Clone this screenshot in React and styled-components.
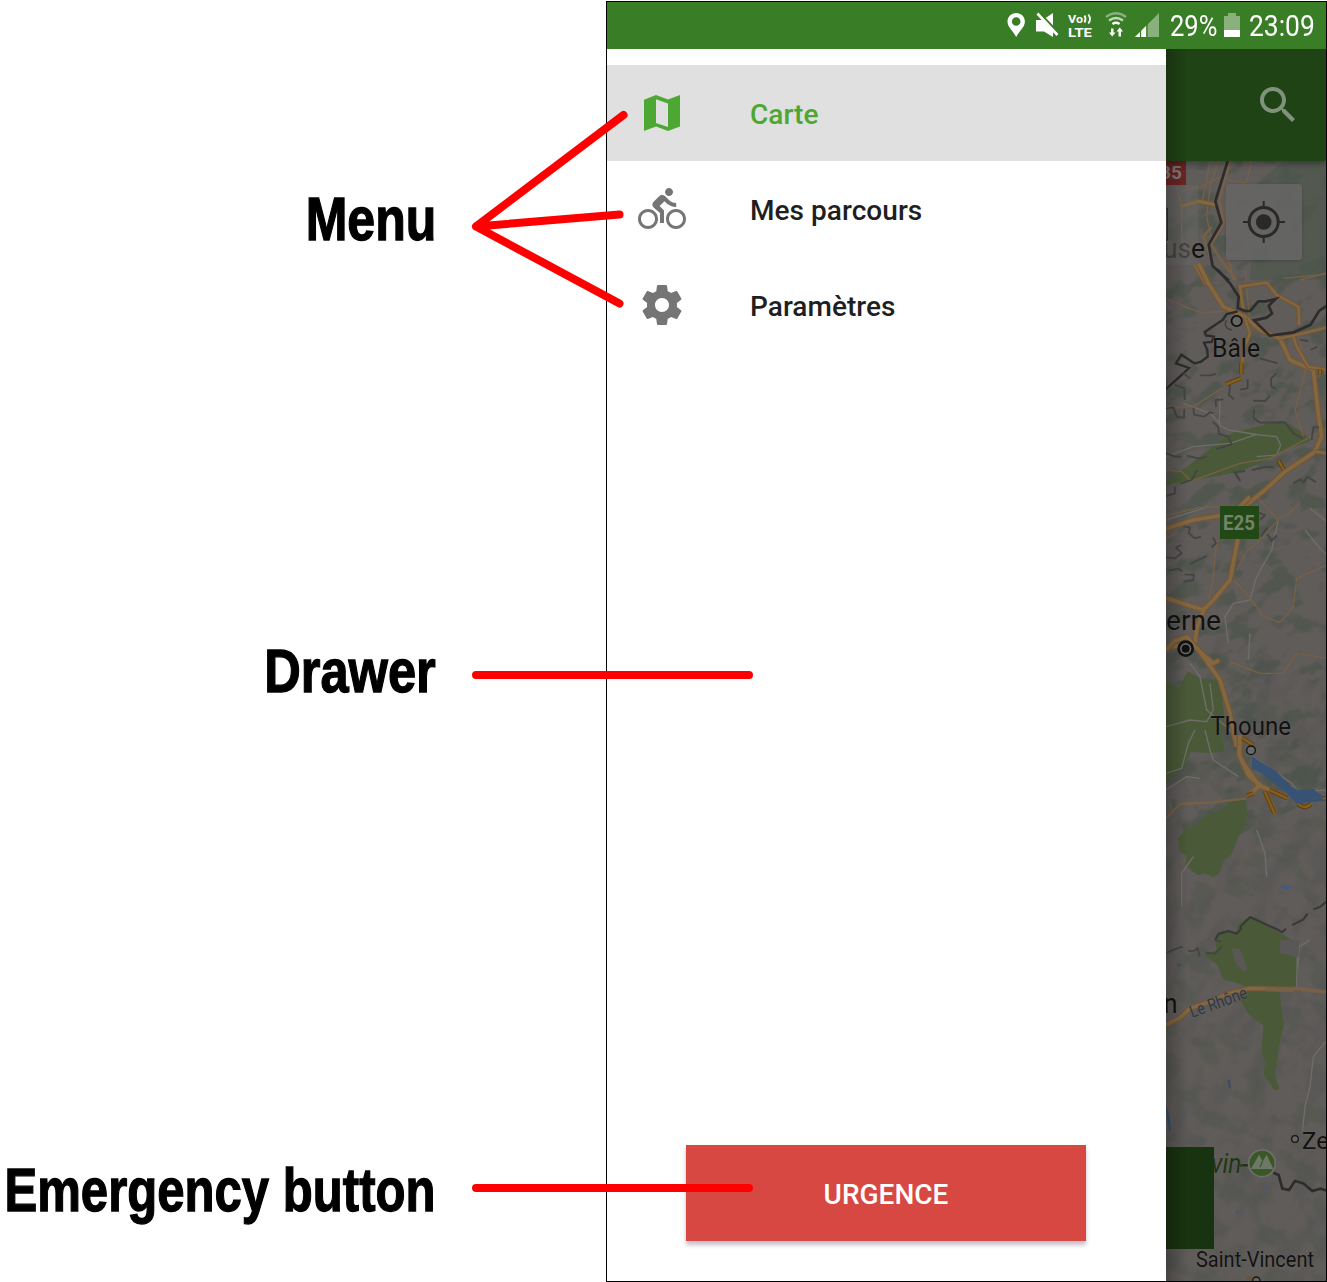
import React from 'react';
import styled, { createGlobalStyle } from 'styled-components';

const GlobalStyle = createGlobalStyle`
  * { box-sizing: border-box; }
  body { margin: 0; background: #fff; }
`;

const Page = styled.main`
  position: relative;
  display: flex;
  width: 1327px;
  height: 1282px;
  overflow: hidden;
  font-family: Roboto, 'Liberation Sans', sans-serif;
`;

const Captions = styled.section`
  width: 606px;
  flex: none;
  display: flex;
  flex-direction: column;
  align-items: flex-end;
  padding: 184px 170px 0 0;
`;

const Caption = styled.h2`
  margin: 0 0 ${(p) => p.$after || 0}px;
  height: 70px;
  white-space: nowrap;
  font: bold 61px/70px 'Liberation Sans', Arial, sans-serif;
  color: #000;
  transform: scaleX(${(p) => p.$squeeze});
  transform-origin: right center;
  -webkit-text-stroke: 1.3px #000;
`;

const Pointers = styled.svg`
  position: absolute;
  inset: 0;
  pointer-events: none;
`;

const Phone = styled.section`
  width: 721px;
  height: 1281px;
  margin-top: 1px;
  border: 1px solid #000;
  display: flex;
  flex-direction: column;
`;

const StatusBar = styled.header`
  height: 47px;
  flex: none;
  display: flex;
  justify-content: flex-end;
  background: #397d26;
  color: #fff;
`;

const StatusIcons = styled.svg`
  flex: none;
  width: 164px;
  height: 47px;
`;

const StatusText = styled.span`
  width: ${(p) => p.$width}px;
  font-size: 29px;
  line-height: 49px;
  white-space: nowrap;
  transform: scaleX(${(p) => p.$squeeze});
  transform-origin: left center;
`;

const Battery = styled.svg`
  width: 17px;
  height: 47px;
  margin-right: 8px;
`;

const Body = styled.div`
  flex: 1;
  display: flex;
  min-height: 0;
`;

const Drawer = styled.nav`
  width: 559px;
  flex: none;
  display: flex;
  flex-direction: column;
  padding-top: 16px;
  background: #fff;
`;

const MenuItem = styled.a`
  height: 96px;
  display: flex;
  align-items: center;
  gap: 64px;
  padding-left: 31px;
  background: ${(p) => (p.$active ? '#e0e0e0' : 'transparent')};
  color: ${(p) => (p.$active ? '#4ca832' : '#1f1f1f')};
  font-size: 28px;
  font-weight: 500;
  line-height: 36px;
`;

const MenuLabel = styled.span`
  padding-top: 4px;
  letter-spacing: 0.05px;
`;

const MenuIcon = styled.svg`
  width: 48px;
  height: 48px;
  fill: ${(p) => (p.$active ? '#4ca832' : '#757575')};
`;

const EmergencyButton = styled.button`
  width: 400px;
  height: 96px;
  margin: auto 0 40px 79px;
  padding: 2px 0 0;
  border: 0;
  background: #d84843;
  box-shadow: 0 4px 4px rgba(60, 30, 60, 0.28);
  color: #fff;
  font: 500 28px Roboto, sans-serif;
`;

const Backdrop = styled.div`
  position: relative;
  width: 160px;
  display: flex;
  flex-direction: column;
  background: #5f5b5a;
  overflow: hidden;
`;

const AppBar = styled.div`
  height: 112px;
  flex: none;
  display: flex;
  align-items: center;
  justify-content: flex-end;
  padding-right: 24px;
  background: #204315;
  box-shadow: 0 3px 6px rgba(0, 0, 0, 0.35);
  z-index: 1;
`;

const SearchIcon = styled.svg`
  width: 48px;
  height: 48px;
  fill: #7f927b;
`;

const MapView = styled.div`
  position: relative;
  flex: 1;
`;

const MapCanvas = styled.svg`
  display: block;
`;

const LocateButton = styled.button`
  position: absolute;
  top: 23px;
  right: 24px;
  width: 76px;
  height: 76px;
  padding: 0;
  border: 0;
  border-radius: 3px;
  background: rgba(103, 101, 100, 0.88);
  box-shadow: 0 1px 3px rgba(0, 0, 0, 0.2);
`;

const DrawerShade = styled.div`
  position: absolute;
  inset: 0 auto 0 0;
  width: 22px;
  z-index: 2;
  background: linear-gradient(90deg, rgba(0, 0, 0, 0.24), transparent);
`;

const ROAD = '#84663f';
const CASING = '#6f573b';

const Road = ({ d, w = 9 }) => (
  <>
    <path d={d} stroke={CASING} strokeWidth={w + 7} />
    <path d={d} stroke={ROAD} strokeWidth={w} />
  </>
);
const Lane = ({ d, w = 4 }) => <path d={d} stroke="#776046" strokeWidth={w} />;
const Path = ({ d }) => <path d={d} stroke="#6e6e6b" strokeWidth="4" />;
const Frontier = ({ d, w = 8 }) => <path d={d} stroke="#2d2b2b" strokeWidth={w} strokeLinejoin="miter" />;
const Ridge = ({ d }) => <path d={d} stroke="#434544" strokeWidth="5.5" />;
const Park = ({ d }) => <path d={d} fill="#4a5a38" stroke="#4a5a38" strokeWidth="10" />;
const Highlight = ({ d }) => (
  <>
    <path d={d} stroke="#59401c" strokeWidth="13" />
    <path d={d} stroke="#8a5f15" strokeWidth="7" />
  </>
);
// Each tile is drawn at three units per pixel, starting at the given row.
const Tile = ({ y, children }) => (
  <g transform={`translate(1150 ${y}) scale(.33333)`} fill="none" strokeLinejoin="round" strokeLinecap="butt">
    {children}
  </g>
);

function Relief() {
  return (
    <>
      <defs>
        <filter id="woods" x="0" y="0" width="100%" height="100%" colorInterpolationFilters="sRGB">
          <feTurbulence type="fractalNoise" baseFrequency="0.035 0.055" numOctaves="3" seed="8" />
          <feColorMatrix values="0 0 0 0 .27  0 0 0 0 .32  0 0 0 0 .27  7 0 0 0 -3.6" />
        </filter>
        <filter id="slopes" x="0" y="0" width="100%" height="100%" colorInterpolationFilters="sRGB">
          <feTurbulence type="fractalNoise" baseFrequency="0.05 0.022" numOctaves="3" seed="21" />
          <feColorMatrix values="0 0 0 0 .3  0 0 0 0 .31  0 0 0 0 .31  4 0 0 0 -1.8" />
        </filter>
      </defs>
      <rect x="1166" y="161" width="160" height="1120" fill="#605c5a" />
      <g transform="rotate(-25 1246 500)">
        <rect x="1050" y="60" width="420" height="740" filter="url(#woods)" opacity=".55" />
      </g>
      <g transform="rotate(30 1246 1000)">
        <rect x="960" y="690" width="560" height="700" filter="url(#slopes)" opacity=".3" />
        <rect x="960" y="720" width="560" height="670" filter="url(#woods)" opacity=".25" />
      </g>
    </>
  );
}

function RegionMap() {
  return (
    <MapCanvas width="160" height="1120" viewBox="1166 161 160 1120">
      <Relief />

      <Tile y={40}>
        <path d="M320 430L400 363H531V720H300Z" fill="#4b564b" opacity=".6" />
        <Lane d="M180 363L168 430L158 480M205 363L180 440L170 530L185 600M305 363L290 428L250 425L215 410L150 440L90 455" />
        <Road d="M90 500L145 484L200 495" />
        <Lane w={7} d="M240 363L208 484L222 550L184 614L220 670L260 720M185 560L160 590L180 650M232 640L250 720" />
        <Lane d="M531 698L450 720M230 440L225 520L245 620" />
        <Road d="M135 675L170 735" />
        <rect x="48" y="435" width="96" height="240" fill="#696966" opacity=".42" />
        <path d="M80 440L95 500V600L120 650" stroke="#746657" strokeWidth="4" />
        <path d="M48 505H52V600H48" stroke="#303030" strokeWidth="4" />
        <Frontier d="M233 363L196 484L214 548L176 614L188 678L237 722" />
        <rect x="48" y="363" width="60" height="72" fill="#6c2524" />
      </Tile>

      <Tile y={270}>
        <Park d="M48 640L120 590L235 500L260 490L395 457L445 485L475 510L420 530L270 600L160 620Z" />
        <Path d="M210 380L208 465L235 480L330 495L380 500L392 525L380 555L320 560M48 560L130 530L240 520L320 493M100 400L180 430L210 460" />
        <Lane d="M48 85L110 112L160 130L240 120M300 160L285 0M400 25L531 12M450 210L465 310L435 420L460 500M48 412L130 410L215 355M120 635L270 580L360 565L531 475M48 600L95 605L120 630" />
        <Road d="M145 -20L175 40L220 110L285 140L330 180L390 205L420 270L490 300L505 430L515 500L495 545L405 605L345 660L270 720" w={11} />
        <Road d="M265 50L350 38L380 75L445 110L448 165M390 205L460 190L531 172M430 200L440 230L475 290L531 300M495 545L531 550M285 145L300 190L280 240L277 285M270 50L280 120" w={7} />
        <Highlight d="M274 278V313M228 343L273 325M385 572L402 600" />
        <Highlight d="M510 298V315" />
        <Frontier d="M203 0L240 40L266 80L263 114L285 123L300 123L325 94L347 94L377 87L356 107L366 131L350 143L312 151L359 197L431 187L482 164L508 122L531 107" />
        <Frontier w={7} d="M263 124L230 132L218 150L164 186L168 196L192 200L185 216L162 218L172 240L173 260L152 276L133 280L94 254L78 280L117 294L100 310L48 357" />
        <path d="M225 165L233 176L245 180M229 150L225 165" stroke="#3e3c3b" strokeWidth="4" />
        <Ridge d="M100 309L120 326M150 316H180L197 312M75 344L103 356L104 390M48 415L70 412L80 440L102 444L103 417M130 413L132 434L162 440L180 427L190 430M380 310L363 325L364 350L378 356M293 327V355L270 359M240 345L237 375L252 388M309 392L345 393L360 378M312 418L311 444L330 458L405 457L430 490L459 506M507 472H490L485 510M188 455L204 470L207 492L235 500L245 523L199 537M48 550L75 560H95M110 557L149 566L170 560M48 678L75 670L74 650M92 641L125 630L142 600M250 603L270 632L257 607L285 603M306 600L350 590L372 593M429 640L451 628L460 638L472 620L498 637M450 210L475 213M482 240L502 230M198 410L197 390L220 388M330 265L383 280" />
      </Tile>

      <Tile y={500}>
        <Park d="M48 550L90 570L115 520L158 545L205 542L218 650L205 740L48 730Z" />
        <Path d="M120 490L150 530L170 630L240 690L260 740M48 680L120 660L170 665L190 630L180 550M235 430L225 350L250 310L300 300L320 230L365 150L385 60M465 90L510 145L531 165M300 400L295 480M48 60L175 20M480 25L531 65" />
        <Lane d="M48 47L150 22L215 20M325 -5L385 60L330 120L290 155L260 210M200 120L190 230L175 310M531 195L440 235L430 320L390 367L340 350L298 290L250 240M240 485L330 520L400 520L440 460L531 475M385 55L410 45L450 10M48 115L80 100" />
        <Road d="M48 86L130 60L215 46L270 20L300 -10M265 110L240 240L190 300L160 330L48 294M165 320L140 385L135 430L48 443" w={11} />
        <Road d="M48 450L75 422L110 411L150 455L210 540L240 640L260 740M150 455L190 490L208 480" w={11} />
        <path d="M211 70V145" stroke="#535a50" strokeWidth="4" />
        <Ridge d="M325 38L345 45L330 60M352 83L332 110M352 103L365 123L380 106M188 112L198 129L185 142M153 110L135 115L116 100L120 82L100 79M94 135L78 143L95 160L75 175L48 172M170 168L120 192M55 212L85 206L97 214M104 223L132 225L130 240L100 245" />
        <rect x="210" y="18" width="117" height="99" fill="#224915" />
        <circle cx="107" cy="446" r="21" stroke="#111" strokeWidth="8" fill="#6d6c69" />
        <circle cx="107" cy="446" r="12" fill="#111" />
      </Tile>

      <Tile y={730}>
        <Park d="M48 0H205L218 60L180 65L120 60L100 105L48 150Z" />
        <Park d="M282 212L288 250L280 280L258 325L240 370L215 390L205 425L190 436L165 425L145 430L112 405L115 375L92 360L90 325L110 300L150 285L175 260L215 245L240 220Z" />
        <Path d="M48 130L95 115L115 40L135 0M165 0L180 60L190 90L265 140M48 180L110 140L150 145M310 80L425 160L445 185L531 180M440 765L448 650L480 630" />
        <Path d="M95 530V430L130 380M320 300L345 370L350 440" />
        <Lane w={7} d="M48 265L90 222L180 218L290 205" />
        <Road d="M270 15L268 75L295 135L330 165L295 198M280 100L325 165L405 200M345 185L375 250" w={12} />
        <Highlight d="M278 25L310 45M358 180L412 205M345 185L373 250M445 222Q462 240 483 222M290 198L310 190M512 207L531 204" />
        <path d="M307 78L330 94L380 125L424 172L445 180L490 178L518 198V213L440 220L410 190L335 130L305 115Z" fill="#385274" />
        <path d="M390 471L400 463L424 467V477H400Z" fill="#475a78" />
        <circle cx="303" cy="61" r="13" stroke="#111" strokeWidth="4" fill="#68696a" />
      </Tile>

      <Tile y={940}>
        <Park d="M170 45L205 35L200 0L215 -22L260 -20L275 -50L300 -65L335 -50L380 -20L400 -10L440 15L438 135L300 140L265 125L225 115L205 70Z" />
        <path d="M245 25L270 28L293 88L280 95L255 65ZM390 0H447L446 52L390 40Z" fill="#5a5857" />
        <Park d="M270 170L320 145H384L388 200L398 250L385 300L370 405L383 445H375L345 400L352 365L340 340L345 255L300 220Z" />
        <Road d="M48 254L90 233L120 205L180 185L235 160L300 145L430 148" w={10} />
        <Lane w={11} d="M345 148L431 151M430 145L531 156" />
        <path d="M236 420L240 445" stroke="#3a4b68" strokeWidth="6" />
        <path d="M48 500L60 570" stroke="#3c5168" strokeWidth="6" />
        <Path d="M531 300L490 350L480 440L465 500L458 570M442 50L440 140" />
        <path d="M80 70L95 75L85 82Z" fill="#3e5071" />
      </Tile>

      <Tile y={730}>
        <path d="M195 630L205 612L236 603L260 611L272 599V590L300 561L385 600L396 607L408 596M427 585L460 568L473 551M490 538L510 531L531 513" stroke="#383836" strokeWidth="6" />
        <Ridge d="M48 669L80 656L98 650M115 663L134 662L143 654L149 680M167 668L195 671L215 650M195 630L213 635" />
      </Tile>

      <Tile y={1100}>
        <path d="M48 25L58 55L59 95" stroke="#3c5168" strokeWidth="5" />
        <Frontier d="M270 196H300M370 218L386 225L397 266L417 270L435 243L460 250L487 273L511 266L531 272" />
        <circle cx="336" cy="190" r="40" fill="#385827" stroke="#706e69" strokeWidth="5" />
        <path d="M303 207L327 164L338 184L350 164L370 207Z" fill="#6f7767" />
        <path d="M338 184L330 201" stroke="#385827" strokeWidth="4" />
        <circle cx="435" cy="117" r="10" stroke="#171717" strokeWidth="4" fill="#686665" />
        <path d="M288 529H320V543H288Z" fill="#68553d" />
        <circle cx="319" cy="542" r="11" stroke="#171717" strokeWidth="4" fill="#686665" />
        <circle cx="343" cy="263" r="5" fill="#415a73" />
        <circle cx="261" cy="337" r="4" fill="#415a73" />
      </Tile>

      <circle cx="1236.7" cy="321" r="5.2" fill="#666665" stroke="#111" strokeWidth="1.8" />
      <g fontFamily="Roboto, sans-serif" fill="#121212" stroke="#6a6765" strokeWidth=".7" paintOrder="stroke">
        <text x="1160" y="178.5" fontSize="19" fontWeight="700" fill="#817a79" stroke="none">85</text>
        <text x="1163" y="258" fontSize="27" fill="#454443" stroke="none" textLength="28" lengthAdjust="spacingAndGlyphs">us</text>
        <text x="1191" y="258" fontSize="27" textLength="14" lengthAdjust="spacingAndGlyphs">e</text>
        <text x="1212" y="357" fontSize="25.5" textLength="48" lengthAdjust="spacingAndGlyphs">Bâle</text>
        <text x="1223" y="530" fontSize="19.5" fontWeight="700" fill="#74836c" stroke="none" textLength="32" lengthAdjust="spacingAndGlyphs">E25</text>
        <text x="1166" y="630" fontSize="28.5" textLength="55" lengthAdjust="spacingAndGlyphs">erne</text>
        <text x="1210.5" y="735" fontSize="25" textLength="80.5" lengthAdjust="spacingAndGlyphs">Thoune</text>
        <text x="1163.5" y="1013" fontSize="27" textLength="14" lengthAdjust="spacingAndGlyphs">n</text>
        <text transform="translate(1192 1018) rotate(-20)" fontSize="17" fill="#2d3746" textLength="60" lengthAdjust="spacingAndGlyphs">Le Rhône</text>
        <text x="1211" y="1173" fontSize="27" fontStyle="italic" fill="#1e3515" textLength="37" lengthAdjust="spacingAndGlyphs">vin-</text>
        <text x="1302" y="1149" fontSize="24">Ze</text>
        <text x="1196" y="1267" fontSize="21.5" textLength="118" lengthAdjust="spacingAndGlyphs">Saint-Vincent</text>
      </g>
      <rect x="1166" y="1147" width="48" height="102" fill="#18330f" />
    </MapCanvas>
  );
}

const MENU = [
  {
    label: 'Carte',
    active: true,
    path: 'M3 5.4L9 3L15 5.2L21 3V18.7L15 21L9 18.8L3 21ZM9 5.1V17L15 19V7.2Z',
  },
  {
    label: 'Mes parcours',
    path: 'M15.5 5.5c1.1 0 2-.9 2-2s-.9-2-2-2-2 .9-2 2 .9 2 2 2zM5 12c-2.8 0-5 2.2-5 5s2.2 5 5 5 5-2.2 5-5-2.2-5-5-5zm0 8.5c-1.9 0-3.5-1.6-3.5-3.5s1.6-3.5 3.5-3.5 3.5 1.6 3.5 3.5-1.6 3.5-3.5 3.5zm5.8-10l2.4-2.4.8.8c1.3 1.3 3 2.1 5.1 2.1V9c-1.5 0-2.7-.6-3.6-1.5l-1.9-1.9c-.5-.4-1-.6-1.6-.6s-1.1.2-1.4.6L7.8 8.4c-.4.4-.6.9-.6 1.4 0 .6.2 1.1.6 1.4L11 14v5h2v-6.2l-2.2-2.3zM19 12c-2.8 0-5 2.2-5 5s2.2 5 5 5 5-2.2 5-5-2.2-5-5-5zm0 8.5c-1.9 0-3.5-1.6-3.5-3.5s1.6-3.5 3.5-3.5 3.5 1.6 3.5 3.5-1.6 3.5-3.5 3.5z',
  },
  {
    label: 'Paramètres',
    path: 'M19.43 12.98c.04-.32.07-.64.07-.98s-.03-.66-.07-.98l2.11-1.65c.19-.15.24-.42.12-.64l-2-3.46c-.12-.22-.39-.3-.61-.22l-2.49 1c-.52-.4-1.08-.73-1.69-.98l-.38-2.65C14.46 2.18 14.25 2 14 2h-4c-.25 0-.46.18-.49.42l-.38 2.65c-.61.25-1.17.59-1.69.98l-2.49-1c-.23-.09-.49 0-.61.22l-2 3.46c-.13.22-.07.49.12.64l2.11 1.65c-.04.32-.07.65-.07.98s.03.66.07.98l-2.11 1.65c-.19.15-.24.42-.12.64l2 3.46c.12.22.39.3.61.22l2.49-1c.52.4 1.08.73 1.69.98l.38 2.65c.03.24.24.42.49.42h4c.25 0 .46-.18.49-.42l.38-2.65c.61-.25 1.17-.59 1.69-.98l2.49 1c.23.09.49 0 .61-.22l2-3.46c.12-.22.07-.49-.12-.64l-2.11-1.65zM12 15.5c-1.93 0-3.5-1.57-3.5-3.5s1.57-3.5 3.5-3.5 3.5 1.57 3.5 3.5-1.57 3.5-3.5 3.5z',
  },
];

function StatusGlyphs() {
  return (
    <StatusIcons viewBox="1006 2 164 47" fill="#fff">
      <path fillRule="evenodd" d="M1016.2 13c-5 0-8.7 3.8-8.7 8.6 0 5.6 5.5 9.4 8.7 15.4 3.2-6 8.7-9.8 8.700-15.400 0-4.800-3.700-8.600-8.700-8.600zm0 4.200a4.300 4.300 0 1 1 0 8.600a4.300 4.300 0 0 1 0-8.600z" />
      <path d="M1036 20h6.500L1053 30.500V37L1044 31.500H1036ZM1045.500 18L1053 13V25.500Z" />
      <path d="M1037.500 13.500L1057.500 35" stroke="#fff" strokeWidth="2.800" />
      <path d="M1039.800 12.800L1059 33" stroke="#397d26" strokeWidth="1.500" />
      <text x="1068" y="22.500" fontFamily="Roboto, sans-serif" fontWeight="700" fontSize="11.500" textLength="15" lengthAdjust="spacingAndGlyphs">Vo</text>
      <path d="M1084.500 15.500q2 3.500 0 7M1088.300 14.500q3.400 4.500 0 9" fill="none" stroke="#fff" strokeWidth="1.800" />
      <text x="1068" y="37" fontFamily="Roboto, sans-serif" fontWeight="700" fontSize="13.500" textLength="24" lengthAdjust="spacingAndGlyphs">LTE</text>
      <g fill="none" stroke="#fff" strokeWidth="2.300">
        <path d="M1106 17q10-7.500 20 0" opacity=".4" />
        <path d="M1109 20.500q7-5 14 0" opacity=".7" />
        <path d="M1112.500 24q3.500-2.500 7 0" />
      </g>
      <path d="M1111 28.500h2.500v4h2l-3.300 4-3.200-4h2ZM1118.500 36.500v-5h-2l3.300-4 3.200 4h-2v5Z" />
      <path d="M1135 37L1159 13V37Z" opacity=".4" />
      <path d="M1135 37L1146 26V37Z" />
      <path d="M1140.500 30V37M1147 24V37" stroke="#397d26" strokeWidth="1.300" />
    </StatusIcons>
  );
}

export default function App() {
  return (
    <Page>
      <GlobalStyle />
      <Captions>
        <Caption $squeeze={0.82} $after={382}>Menu</Caption>
        <Caption $squeeze={0.83} $after={449}>Drawer</Caption>
        <Caption $squeeze={0.805}>Emergency button</Caption>
      </Captions>
      <Phone>
        <StatusBar>
          <StatusGlyphs />
          <StatusText $width={54} $squeeze={0.88}>29%</StatusText>
          <Battery viewBox="0 0 17 47" fill="#fff">
            <path d="M4 11h8v3h4v15H0V14h4Z" opacity=".4" />
            <path d="M0 28h16v7H0Z" />
          </Battery>
          <StatusText $width={77} $squeeze={0.91}>23:09</StatusText>
        </StatusBar>
        <Body>
          <Drawer>
            {MENU.map((item) => (
              <MenuItem key={item.label} $active={item.active}>
                <MenuIcon viewBox="0 0 24 24" $active={item.active}>
                  <path fillRule="evenodd" d={item.path} />
                </MenuIcon>
                <MenuLabel>{item.label}</MenuLabel>
              </MenuItem>
            ))}
            <EmergencyButton>URGENCE</EmergencyButton>
          </Drawer>
          <Backdrop>
            <AppBar>
              <SearchIcon viewBox="0 0 24 24">
                <path d="M15.5 14h-.79l-.28-.27C15.41 12.59 16 11.11 16 9.5 16 5.91 13.09 3 9.5 3S3 5.91 3 9.5 5.91 16 9.5 16c1.61 0 3.09-.59 4.23-1.57l.27.28v.79l5 4.99L20.49 19l-4.990-5zm-6 0C7.010 14 5 11.990 5 9.500S7.010 5 9.500 5 14 7.010 14 9.500 11.990 14 9.500 14z" />
              </SearchIcon>
            </AppBar>
            <MapView>
              <RegionMap />
              <LocateButton>
                <svg width="76" height="76" viewBox="0 0 76 76" fill="none" stroke="#2a2928">
                  <circle cx="37.7" cy="38" r="14.5" strokeWidth="3" />
                  <circle cx="37.7" cy="38" r="7.8" fill="#2a2928" stroke="none" />
                  <path d="M37.7 17v7M37.7 52v7M17 38h7M52 38h7" strokeWidth="2" />
                </svg>
              </LocateButton>
            </MapView>
            <DrawerShade />
          </Backdrop>
        </Body>
      </Phone>
      <Pointers width="1327" height="1282" fill="none" stroke="#f00" strokeWidth="8" strokeLinecap="round" strokeLinejoin="round">
        <path d="M623.5 115L476 226.5L619.5 214.5M476 226.5L619.5 303.5M476 675H749M476 1188H749" />
      </Pointers>
    </Page>
  );
}
